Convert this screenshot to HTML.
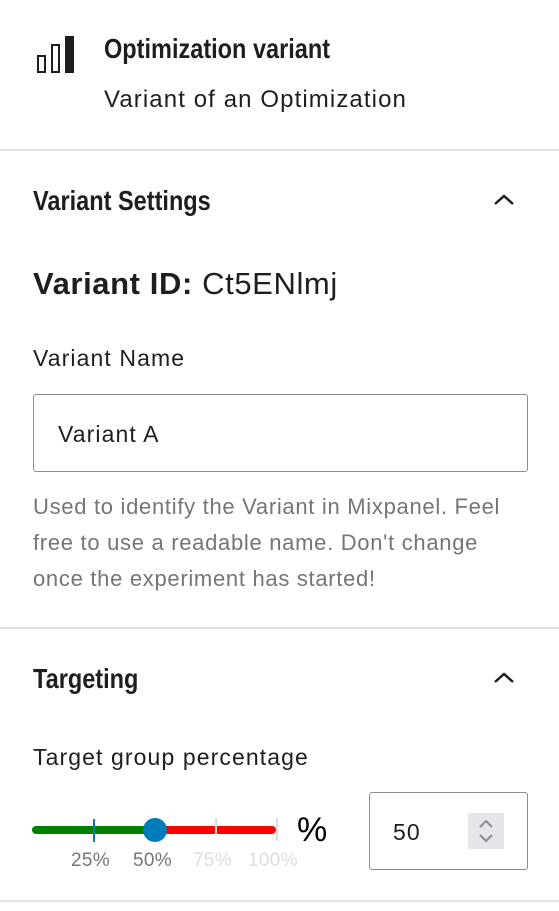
<!DOCTYPE html>
<html><head><style>
*{margin:0;padding:0;box-sizing:border-box}
body{width:559px;height:911px;background:#fff;position:relative;overflow:hidden;font-family:"Liberation Sans",sans-serif;color:#1e1e1e}
.a{position:absolute;white-space:nowrap}
.h{font-weight:bold;font-size:28px;transform:scaleX(0.84);transform-origin:left top;color:#1e1e1e}
.hr{position:absolute;left:0;width:559px;height:2px;background:#e0e0e0}
.t{font-size:23px;letter-spacing:1.1px}
.g{color:#757575;font-size:22px;line-height:36px;letter-spacing:0.7px}
</style></head><body>
<svg class="a" style="left:36px;top:36px" width="40" height="38" viewBox="0 0 40 38">
<rect x="2" y="20" width="7" height="16" fill="none" stroke="#1e1e1e" stroke-width="2"/>
<rect x="16" y="9" width="7" height="27" fill="none" stroke="#1e1e1e" stroke-width="2"/>
<rect x="29" y="0" width="9" height="37" fill="#1e1e1e"/>
</svg>
<div class="a h" style="left:104px;top:33px">Optimization variant</div>
<div class="a t" style="left:104px;top:86px;font-size:24px">Variant of an Optimization</div>
<div class="hr" style="top:149px"></div>
<div class="a h" style="left:33px;top:185px">Variant Settings</div>
<svg class="a" style="left:492px;top:192px" width="24" height="16"><path d="M3 12 L12 4 L21 12" fill="none" stroke="#1e1e1e" stroke-width="2.5"/></svg>
<div class="a" style="left:33px;top:266px;font-size:31px;letter-spacing:0.6px"><b>Variant ID:</b> Ct5ENlmj</div>
<div class="a t" style="left:33px;top:345px">Variant Name</div>
<div class="a" style="left:33px;top:394px;width:495px;height:78px;border:1.5px solid #8c8c8c;border-radius:3px"></div>
<div class="a t" style="left:58px;top:421px">Variant A</div>
<div class="a g" style="left:33px;top:489px">Used to identify the Variant in Mixpanel. Feel<br>free to use a readable name. Don't change<br>once the experiment has started!</div>
<div class="hr" style="top:627px"></div>
<div class="a h" style="left:33px;top:663px">Targeting</div>
<svg class="a" style="left:492px;top:670px" width="24" height="16"><path d="M3 12 L12 4 L21 12" fill="none" stroke="#1e1e1e" stroke-width="2.5"/></svg>
<div class="a t" style="left:33px;top:744px">Target group percentage</div>
<div class="a" style="left:32px;top:826px;width:124px;height:8px;background:#008000;border-radius:4px 0 0 4px"></div>
<div class="a" style="left:150px;top:826px;width:126px;height:8px;background:#ff0000;border-radius:0 4px 4px 0"></div>
<div class="a" style="left:93px;top:819px;width:2px;height:23px;background:#007cba"></div>
<div class="a" style="left:215px;top:818px;width:2px;height:16px;background:#ddd"></div>
<div class="a" style="left:276px;top:818px;width:2px;height:23px;background:#ddd"></div>
<div class="a" style="left:143px;top:818px;width:24px;height:24px;border-radius:50%;background:#007cba"></div>
<div class="a" style="left:71px;top:850px;font-size:19px;letter-spacing:0.3px;color:#757575">25%</div>
<div class="a" style="left:133px;top:850px;font-size:19px;letter-spacing:0.3px;color:#757575">50%</div>
<div class="a" style="left:193px;top:850px;font-size:19px;letter-spacing:0.3px;color:#ddd">75%</div>
<div class="a" style="left:248px;top:850px;font-size:19px;letter-spacing:0.3px;color:#ddd">100%</div>
<div class="a" style="left:297px;top:811px;font-size:34px;color:#000">%</div>
<div class="a" style="left:369px;top:792px;width:159px;height:78px;border:1.5px solid #8c8c8c;border-radius:3px"></div>
<div class="a t" style="left:393px;top:819px">50</div>
<div class="a" style="left:468px;top:813px;width:36px;height:36px;background:#e6e6ea"></div>
<svg class="a" style="left:476px;top:817px" width="20" height="28"><path d="M4 10 L10 4 L16 10 M4 18 L10 24 L16 18" fill="none" stroke="#8a8a95" stroke-width="2"/></svg>
<div class="hr" style="top:900px"></div>
</body></html>
